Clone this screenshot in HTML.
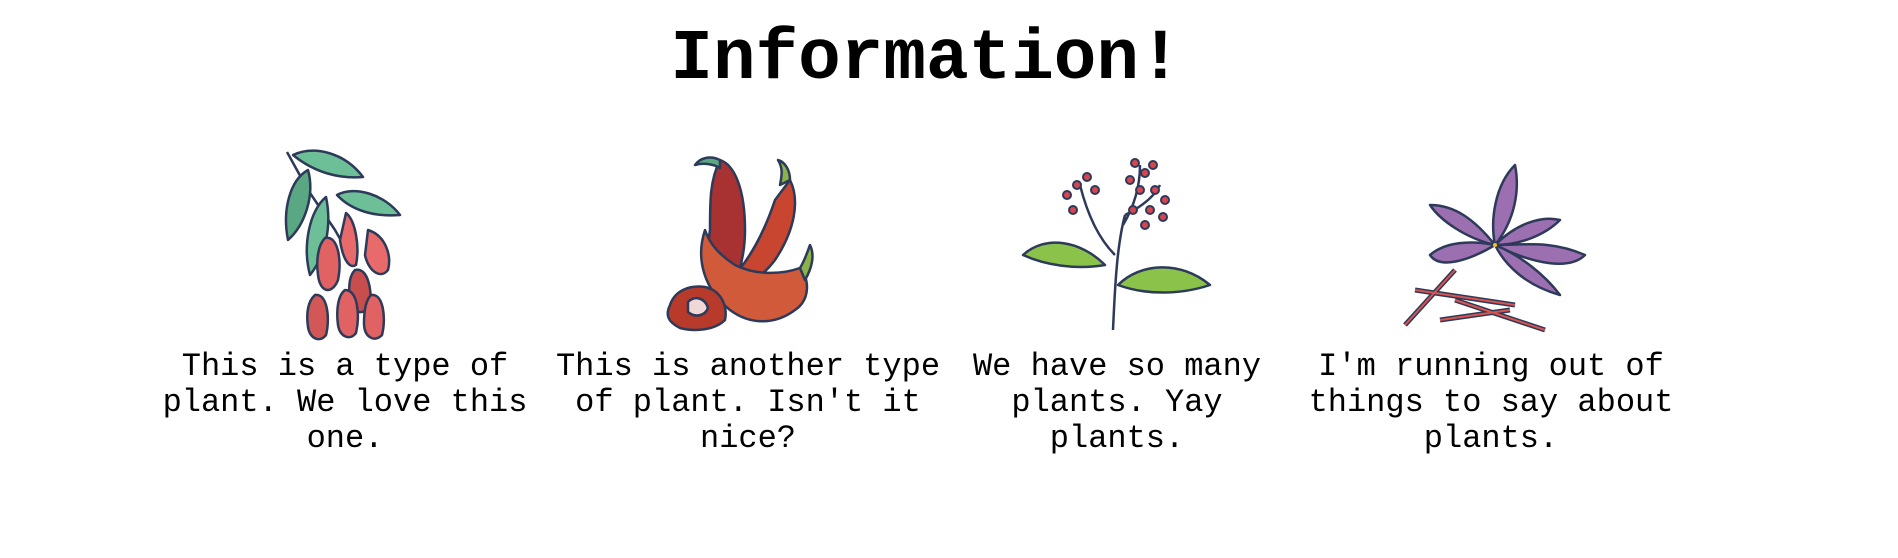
<!DOCTYPE html>
<html><head><meta charset="utf-8"><style>
html,body{margin:0;padding:0;background:#fff;width:1898px;height:558px;overflow:hidden;position:relative}
h1{position:absolute;left:0;width:1852px;top:25px;margin:0;text-align:center;font:bold 71px/1 "Liberation Mono",monospace;color:#000}
.t{position:absolute;top:349px;width:440px;margin-left:-220px;text-align:center;font:32px/36px "Liberation Mono",monospace;color:#000}
svg{position:absolute}
</style></head><body>
<h1>Information!</h1>

<svg style="left:260px;top:145px" width="170" height="200" viewBox="0 0 170 200">
<g stroke="#2d3a5a" stroke-width="2.5" stroke-linejoin="round">
<path d="M27 7 L48 45 L75 85 L95 120" fill="none"/>
<path d="M33 10 C55 0 85 8 103 32 C80 34 55 28 33 10Z" fill="#6dbf97"/>
<path d="M48 25 C30 35 22 65 28 95 C45 80 55 50 48 25Z" fill="#5aa883"/>
<path d="M77 50 C95 40 125 50 140 70 C115 72 92 66 77 50Z" fill="#6dbf97"/>
<path d="M66 52 C50 65 42 100 50 130 C66 110 72 80 66 52Z" fill="#6dbf97"/>
<path d="M86 68 C95 75 100 100 96 120 C88 125 82 110 80 95Z" fill="#e86a6a"/>
<path d="M65 93 C78 90 82 115 78 135 C72 150 60 148 58 130 C56 115 58 100 65 93Z" fill="#e06262"/>
<path d="M108 85 C125 90 132 110 128 125 C120 135 108 125 105 110Z" fill="#e86a6a"/>
<path d="M95 125 C108 122 112 145 110 160 C104 172 92 168 90 155 C88 140 90 130 95 125Z" fill="#c84e4e"/>
<path d="M111 150 C124 148 126 175 122 190 C114 198 104 192 104 178 C104 165 106 155 111 150Z" fill="#e06262"/>
<path d="M55 150 C68 148 70 175 66 190 C60 198 50 194 48 182 C46 168 48 156 55 150Z" fill="#d25858"/>
<path d="M85 145 C98 145 100 170 96 188 C90 196 80 192 78 180 C76 165 78 150 85 145Z" fill="#e06262"/>
</g></svg>

<svg style="left:650px;top:150px" width="200" height="185" viewBox="0 0 200 185">
<g stroke="#2d3a5a" stroke-width="2.5" stroke-linejoin="round">
<path d="M70 10 C85 15 95 40 95 80 C95 110 85 140 75 150 C60 140 55 110 60 80 C60 50 60 30 70 10Z" fill="#a83232"/>
<path d="M70 10 C60 5 50 8 45 15 C55 12 65 15 70 18Z" fill="#5aa883"/>
<path d="M140 30 C150 50 145 80 125 110 C110 130 90 140 80 130 C100 110 115 80 125 50Z" fill="#c84530"/>
<path d="M140 30 C140 20 135 12 128 10 C133 18 132 25 130 35Z" fill="#8bb34a"/>
<path d="M55 80 C45 110 55 140 80 160 C100 175 125 175 145 160 C160 150 160 130 150 118 C130 125 105 125 85 115 C70 105 60 95 55 80Z" fill="#d05a3a"/>
<path d="M150 118 C155 110 158 100 160 95 C165 105 162 118 155 130Z" fill="#8bb34a"/>
<path d="M20 155 C25 140 40 135 55 137 C70 140 78 155 75 170 C65 180 45 182 30 178 C18 172 15 165 20 155Z" fill="#b83a2a"/>
<path d="M38 152 C45 145 55 148 58 158 C55 166 45 168 38 162Z" fill="#f0d8d8"/>
</g></svg>

<svg style="left:1015px;top:155px" width="200" height="180" viewBox="0 0 200 180">
<g stroke="#2d3a5a" stroke-width="2.5" stroke-linejoin="round">
<path d="M98 175 C100 130 102 90 110 60 M100 100 C80 80 70 50 65 30 M108 70 C120 50 125 30 125 10 M110 60 C130 50 140 40 145 30" fill="none"/>
<path d="M8 100 C30 80 65 85 90 110 C60 115 30 110 8 100Z" fill="#8bc34a"/>
<path d="M103 130 C125 108 165 105 195 130 C165 140 130 140 103 130Z" fill="#8bc34a"/>
</g>
<g fill="#d9454f" stroke="#2d3a5a" stroke-width="2">
<circle cx="62" cy="30" r="4"/><circle cx="72" cy="22" r="4"/><circle cx="52" cy="40" r="4"/><circle cx="80" cy="35" r="4"/><circle cx="58" cy="55" r="4"/>
<circle cx="120" cy="8" r="4"/><circle cx="130" cy="18" r="4"/><circle cx="115" cy="25" r="4"/><circle cx="138" cy="10" r="4"/><circle cx="125" cy="35" r="4"/>
<circle cx="140" cy="35" r="4"/><circle cx="150" cy="45" r="4"/><circle cx="135" cy="55" r="4"/><circle cx="148" cy="62" r="4"/><circle cx="130" cy="70" r="4"/><circle cx="118" cy="55" r="4"/>
</g></svg>

<svg style="left:1395px;top:160px" width="200" height="175" viewBox="0 0 200 175">
<g stroke="#2d3a5a" stroke-width="2.5" stroke-linejoin="round">
<path d="M100 85 C95 60 100 25 120 5 C125 30 120 60 100 85Z" fill="#9b6fb0"/>
<path d="M100 85 C80 60 60 45 35 45 C45 60 70 78 100 85Z" fill="#9b6fb0"/>
<path d="M100 85 C120 65 145 55 165 60 C150 75 125 85 100 85Z" fill="#9b6fb0"/>
<path d="M100 85 C130 85 155 80 190 95 C175 110 140 105 100 85Z" fill="#9b6fb0"/>
<path d="M100 85 C110 105 130 125 165 135 C150 115 125 95 100 85Z" fill="#9b6fb0"/>
<path d="M100 85 C75 80 50 82 35 95 C45 110 75 100 100 85Z" fill="#9b6fb0"/>
<path d="M60 110 L10 165 M20 130 L120 145 M60 140 L150 170 M45 160 L115 150" stroke="#2d3a5a" stroke-width="5" fill="none"/>
<path d="M60 110 L10 165 M20 130 L120 145 M60 140 L150 170 M45 160 L115 150" stroke="#d9534f" stroke-width="2" fill="none"/>
</g><circle cx="100" cy="85" r="2" fill="#f0c030"/></svg>

<div class="t" style="left:345px">This is a type of<br>plant. We love this<br>one.</div>
<div class="t" style="left:748px">This is another type<br>of plant. Isn't it<br>nice?</div>
<div class="t" style="left:1117px">We have so many<br>plants. Yay<br>plants.</div>
<div class="t" style="left:1491px">I'm running out of<br>things to say about<br>plants.</div>
</body></html>
